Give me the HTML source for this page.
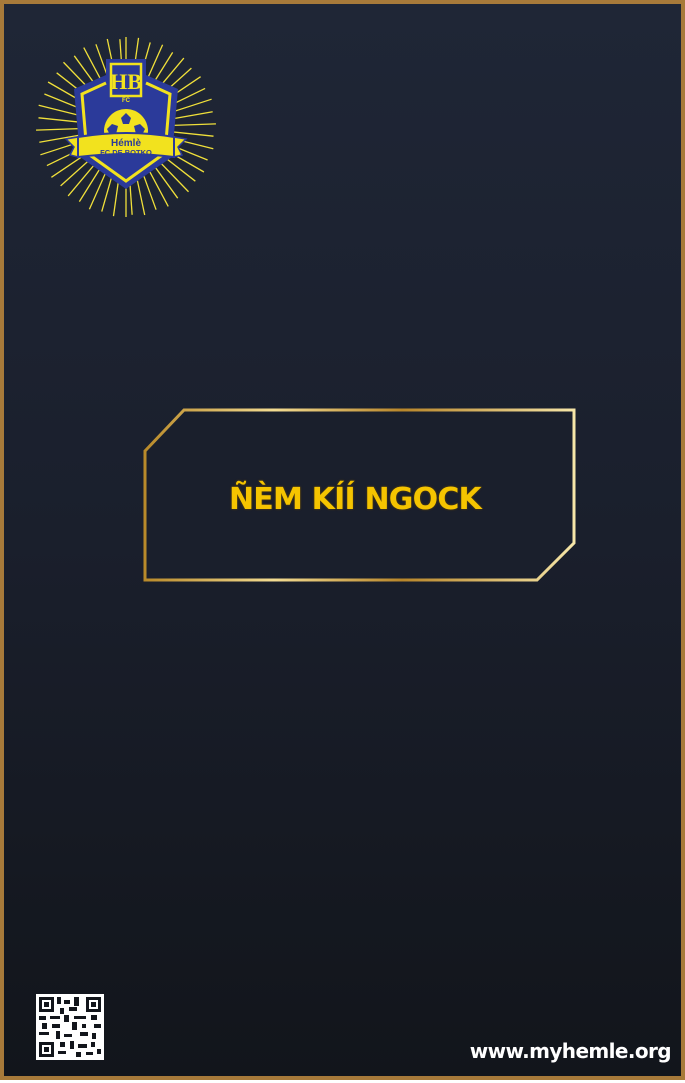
<!DOCTYPE html>
<html><head><meta charset="utf-8"><style>
html,body{margin:0;padding:0;}
body{width:685px;height:1083px;position:relative;overflow:hidden;background:#fff;}
.card{position:absolute;left:0;top:0;width:677px;height:1072px;border:4px solid #a77a3a;background:linear-gradient(180deg,#1f2636 0%,#1a1f2c 50%,#12151b 100%);}
.t{position:absolute;left:140px;top:482px;width:430px;text-align:center;font-family:"DejaVu Sans",sans-serif;font-weight:bold;font-size:30px;color:#f5c400;text-shadow:0 0 2px #6b4a00;letter-spacing:-0.8px;}
.url{position:absolute;right:14px;top:1039px;font-family:"DejaVu Sans",sans-serif;font-weight:bold;font-size:20px;color:#fff;letter-spacing:-0.6px;}
</style></head><body>
<div class="card"></div>
<svg width="685" height="1083" style="position:absolute;left:0;top:0">
<defs>
<linearGradient id="g" x1="0" y1="0" x2="1" y2="0">
<stop offset="0" stop-color="#b98a2a"/><stop offset="0.3" stop-color="#f3dc92"/><stop offset="0.6" stop-color="#b8862a"/><stop offset="1" stop-color="#f6e6a8"/></linearGradient>
</defs>
<polygon points="145,451 184,410 574,410 574,543 537,580 145,580" fill="#1a1f2c" stroke="url(#g)" stroke-width="3"/>
<g transform="translate(126,127)">
<g stroke="#f0e03a" stroke-width="1.3">
<line x1="0" y1="-90" x2="0" y2="90" transform="rotate(0)"/><line x1="0" y1="-90" x2="0" y2="90" transform="rotate(8)"/><line x1="0" y1="-88" x2="0" y2="88" transform="rotate(16)"/><line x1="0" y1="-90" x2="0" y2="90" transform="rotate(24)"/><line x1="0" y1="-88" x2="0" y2="88" transform="rotate(32)"/><line x1="0" y1="-90" x2="0" y2="90" transform="rotate(40)"/><line x1="0" y1="-88" x2="0" y2="88" transform="rotate(48)"/><line x1="0" y1="-90" x2="0" y2="90" transform="rotate(56)"/><line x1="0" y1="-88" x2="0" y2="88" transform="rotate(64)"/><line x1="0" y1="-90" x2="0" y2="90" transform="rotate(72)"/><line x1="0" y1="-88" x2="0" y2="88" transform="rotate(80)"/><line x1="0" y1="-90" x2="0" y2="90" transform="rotate(88)"/><line x1="0" y1="-88" x2="0" y2="88" transform="rotate(96)"/><line x1="0" y1="-90" x2="0" y2="90" transform="rotate(104)"/><line x1="0" y1="-88" x2="0" y2="88" transform="rotate(112)"/><line x1="0" y1="-90" x2="0" y2="90" transform="rotate(120)"/><line x1="0" y1="-88" x2="0" y2="88" transform="rotate(128)"/><line x1="0" y1="-90" x2="0" y2="90" transform="rotate(136)"/><line x1="0" y1="-88" x2="0" y2="88" transform="rotate(144)"/><line x1="0" y1="-90" x2="0" y2="90" transform="rotate(152)"/><line x1="0" y1="-88" x2="0" y2="88" transform="rotate(160)"/><line x1="0" y1="-90" x2="0" y2="90" transform="rotate(168)"/><line x1="0" y1="-88" x2="0" y2="88" transform="rotate(176)"/>
</g>
<path d="M-52,-38 L-20,-52 L-20,-68 L20,-68 L20,-52 L52,-38 L46,30 L0,62 L-46,30 Z" fill="#2b3a9a"/>
<path d="M-20,-44 L-44,-33 L-39,26 L0,54 L39,26 L44,-33 L20,-44" fill="none" stroke="#f2e21e" stroke-width="3"/>
<rect x="-15" y="-63" width="30" height="32" fill="none" stroke="#f2e21e" stroke-width="2.5"/>
<text x="0" y="-38" text-anchor="middle" font-family="Liberation Serif,serif" font-weight="bold" font-size="22" fill="#f2e21e">HB</text>
<text x="0" y="-25" text-anchor="middle" font-family="Liberation Sans,sans-serif" font-weight="bold" font-size="6" fill="#f2e21e">FC</text>
<circle cx="0" cy="4" r="22" fill="#f2e21e"/>
<g fill="#2b3a9a"><polygon points="0,-14 5,-9 3,-3 -3,-3 -5,-9"/><polygon points="-14,-3 -8,-1 -10,7 -16,8 -19,2"/><polygon points="14,-3 8,-1 10,7 16,8 19,2"/></g>
<path d="M-60,12 L-48,10 L-48,30 L-56,28 L-52,20 Z M60,12 L48,10 L48,30 L56,28 L52,20 Z" fill="#f2e21e" stroke="#2b3a9a" stroke-width="1.5"/>
<path d="M-48,10 Q0,2 48,10 L48,30 Q0,24 -48,30 Z" fill="#f2e21e" stroke="#2b3a9a" stroke-width="2"/>
<text x="0" y="19" text-anchor="middle" font-family="Liberation Sans,sans-serif" font-weight="bold" font-size="10" fill="#2b3a9a">Hémlè</text>
<text x="0" y="28" text-anchor="middle" font-family="Liberation Sans,sans-serif" font-weight="bold" font-size="7.5" fill="#2b3a9a">FC DE BOTKO</text>
</g>
<g transform="translate(36,994)" fill="#fff">
<rect x="0" y="0" width="68" height="66" fill="#fff"/>
<g fill="#12151b">
<rect x="3" y="3" width="15" height="15"/><rect x="50" y="3" width="15" height="15"/><rect x="3" y="48" width="15" height="15"/>
<rect x="21" y="3" width="4" height="7"/><rect x="28" y="6" width="6" height="4"/><rect x="38" y="3" width="5" height="9"/><rect x="24" y="14" width="4" height="6"/><rect x="33" y="13" width="8" height="4"/>
<rect x="3" y="22" width="7" height="4"/><rect x="14" y="22" width="10" height="3"/><rect x="28" y="21" width="5" height="7"/><rect x="38" y="22" width="12" height="3"/><rect x="55" y="21" width="6" height="5"/>
<rect x="6" y="29" width="5" height="6"/><rect x="16" y="30" width="8" height="4"/><rect x="36" y="28" width="5" height="8"/><rect x="46" y="30" width="4" height="4"/><rect x="58" y="30" width="7" height="4"/>
<rect x="3" y="38" width="10" height="3"/><rect x="20" y="37" width="4" height="8"/><rect x="28" y="40" width="8" height="3"/><rect x="44" y="38" width="8" height="4"/><rect x="56" y="39" width="4" height="6"/>
<rect x="24" y="48" width="5" height="5"/><rect x="34" y="47" width="4" height="8"/><rect x="42" y="50" width="9" height="4"/><rect x="55" y="48" width="4" height="5"/>
<rect x="22" y="57" width="8" height="3"/><rect x="40" y="58" width="5" height="5"/><rect x="50" y="58" width="7" height="3"/><rect x="61" y="55" width="4" height="5"/>
</g>
<g fill="#fff"><rect x="6" y="6" width="9" height="9"/><rect x="53" y="6" width="9" height="9"/><rect x="6" y="51" width="9" height="9"/></g>
<g fill="#12151b"><rect x="8" y="8" width="5" height="5"/><rect x="55" y="8" width="5" height="5"/><rect x="8" y="53" width="5" height="5"/></g>
</g>
</svg>
<div class="t">ÑÈM KÍÍ NGOCK</div>
<div class="url">www.myhemle.org</div>
</body></html>
